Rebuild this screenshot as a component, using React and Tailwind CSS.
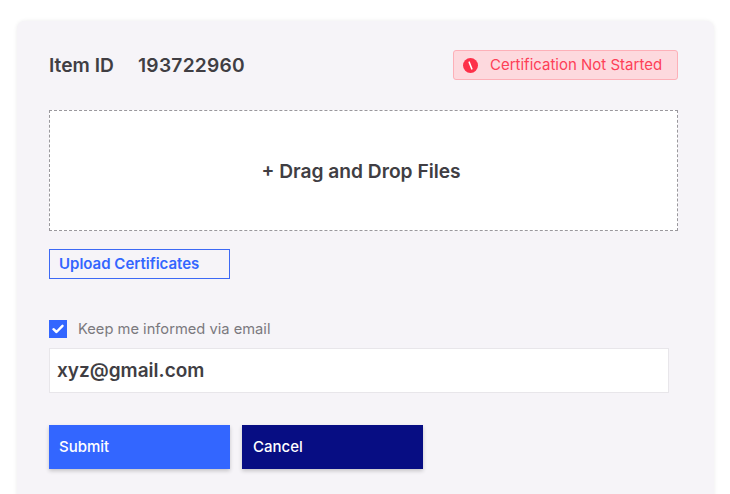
export default function App() {
  return (
    <div className="h-[494px] w-[730px] overflow-hidden bg-white pt-[21px] pl-[17px] font-['Inter',sans-serif]">
      <div className="w-[697px] h-[520px] rounded-t-[8px] bg-[#f6f4f8] pl-[32px] pr-[36px] pt-[29px] shadow-[0_0_4px_rgba(0,0,0,0.08)]">
        <div className="flex h-[30px] items-center justify-between">
          <div className="flex items-center text-[19.2px] font-semibold text-[#403e43]">
            <span className="w-[89px]">Item ID</span>
            <span className="tracking-[0.25px]">193722960</span>
          </div>
          <div className="flex h-[30px] w-[225px] items-center rounded-[3px] border border-[#fdb0b8] bg-[#fdd9de] pl-[9px] pt-px text-[15px] text-[#fd3f57]">
            <svg width="15" height="15" viewBox="0 0 15 15" className="mr-[12px] shrink-0">
              <circle cx="7.5" cy="7.5" r="7.5" fill="#fd3049" />
              <path d="M6.2 4.2 L8.8 10.8" stroke="#ffffff" strokeWidth="1.6" strokeLinecap="round" />
            </svg>
            <span>Certification Not Started</span>
          </div>
        </div>
        <div className="mt-[30px] flex h-[121px] w-[629px] items-center justify-center border border-dashed border-[#9a989d] bg-white pr-[5px] pt-px text-[19.2px] font-semibold text-[#403e43]">
          + Drag and Drop Files
        </div>
        <div className="mt-[18px] flex h-[30px] w-[181px] items-center border border-[#3d69f5] pl-[9px] text-[15px] font-semibold text-[#3366ff]">
          Upload Certificates
        </div>
        <div className="mt-[41px] flex h-[18px] items-center">
          <div className="flex h-[18px] w-[18px] items-center justify-center bg-[#3366ff]">
            <svg width="12" height="10" viewBox="0 0 12 10" fill="none">
              <path d="M1.5 5.2 L4.5 8 L10.5 1.8" stroke="#ffffff" strokeWidth="2.4" strokeLinecap="round" strokeLinejoin="round" />
            </svg>
          </div>
          <span className="ml-[11px] text-[14.7px] text-[#7b797e]">Keep me informed via email</span>
        </div>
        <div className="mt-[10px] flex h-[45px] w-[620px] items-center border border-[#e8e6ea] bg-white pl-[7px] pt-[2px] text-[19px] font-semibold text-[#403e43]">
          xyz@gmail.com
        </div>
        <div className="mt-[32px] flex gap-[12px]">
          <div className="flex h-[44px] w-[181px] items-center bg-[#3366ff] pl-[10px] text-[15px] font-medium text-white shadow-[0_2px_4px_rgba(0,0,0,0.2)]">
            Submit
          </div>
          <div className="flex h-[44px] w-[181px] items-center bg-[#070d83] pl-[11px] text-[15px] font-medium text-white shadow-[0_2px_4px_rgba(0,0,0,0.2)]">
            Cancel
          </div>
        </div>
      </div>
    </div>
  );
}
